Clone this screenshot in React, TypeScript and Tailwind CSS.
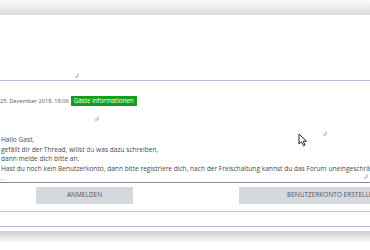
import React from 'react';

const font = { fontFamily: '"Open Sans", "Liberation Sans", sans-serif' };

const Cursor: React.FC = () => (
  <svg className="absolute left-[298px] top-[133px]" width="10" height="14" viewBox="0 0 10 14">
    <path d="M1 1 L1 11 L3.5 8.8 L5.5 12.8 L7 12 L5.2 8.2 L8.5 8.2 Z" fill="#fff" stroke="#222" strokeWidth="1" strokeLinejoin="round" />
  </svg>
);

const Mark: React.FC<{ className: string }> = ({ className }) => (
  <svg className={`absolute ${className}`} width="5" height="5" viewBox="0 0 5 5">
    <path d="M4 0.5 L4 3 Q4 4 3 4 L1 4" fill="none" stroke="#888" strokeWidth="0.8" />
  </svg>
);

const App: React.FC = () => {
  return (
    <div className="relative w-[370px] h-[250px] overflow-hidden bg-white text-[#4a4a4a]" style={font}>
      <div className="h-[15px] bg-gradient-to-b from-[#fbfbfb] to-[#dcdcdc]" />
      <div className="h-[66px] border-b border-[#b3c6dd] bg-white" />

      <div className="flex items-center h-[20px] mt-[10px] text-[5.7px] text-[#555]">
        <span>25. Dezember 2018, 18:06</span>
        <span className="ml-[2px] bg-[#14a014] text-white text-[6.2px] px-[3px] h-[10px] flex items-center leading-none">
          Gäste Informationen
        </span>
      </div>

      <div className="mt-[24px] pl-[1px] text-[6.6px] leading-[9.5px] whitespace-nowrap text-[#454b53]">
        <p>Hallo Gast,</p>
        <p>
          gefällt dir der Thread, willst <span className="text-[#3e6e9e]">du</span> was dazu schreiben,
        </p>
        <p>dann melde dich bitte an.</p>
        <p>
          Hast du noch kein Benutzerkonto, dann bitte registriere dich, nach der Freischaltung kannst du das Forum uneingeschränkt nutzen.
        </p>
        <p>.</p>
      </div>

      <div className="mt-[-1px] border-t border-[#7f8b98] h-[29px] flex items-start pt-[4px] overflow-hidden">
        <button className="ml-[36px] w-[97px] shrink-0 h-[17px] bg-[#d3d9df] text-[6.5px] uppercase text-[#555]">
          Anmelden
        </button>
        <button className="ml-[106px] w-[200px] shrink-0 h-[17px] bg-[#d3d9df] text-[6.5px] uppercase text-[#555] text-left pl-[48px]">
          Benutzerkonto erstellen
        </button>
      </div>

      <div className="h-[15px] border-t border-[#b3c6dd]" />
      <div className="h-[5px] border-t border-[#b3c6dd] bg-white" />
      <div className="h-[11px] bg-gradient-to-b from-[#cdcdcd] to-[#fafafa]" />

      <Cursor />
      <Mark className="left-[74px] top-[73px]" />
      <Mark className="left-[94px] top-[116px]" />
      <Mark className="left-[322px] top-[131px]" />
      <Mark className="left-[363px] top-[174px]" />
    </div>
  );
};

export default App;
